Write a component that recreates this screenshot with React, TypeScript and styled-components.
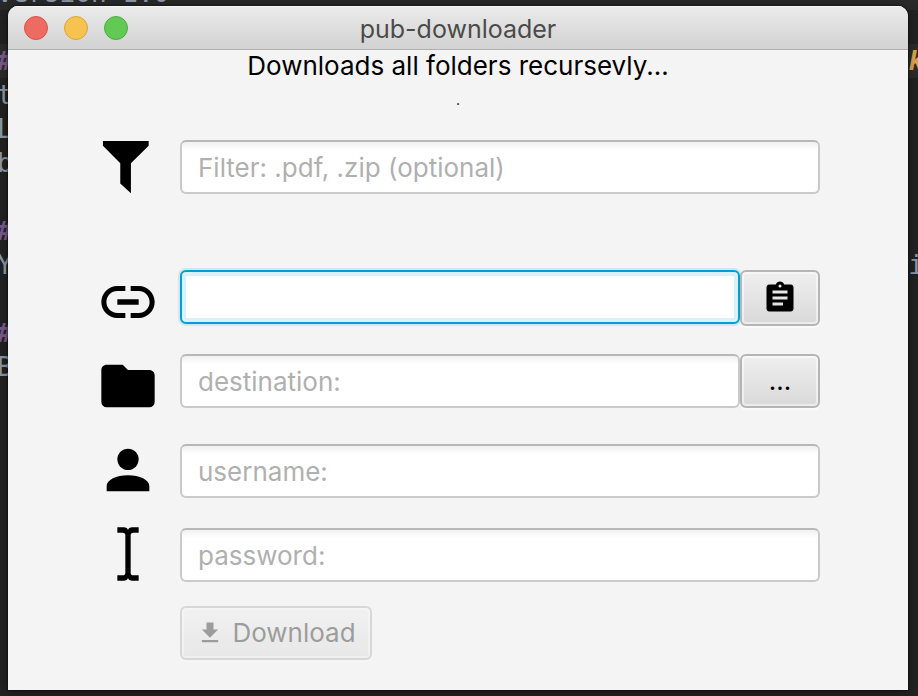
import React from "react";
import styled, { createGlobalStyle, css } from "styled-components";

const GlobalStyle = createGlobalStyle`
  *, *::before, *::after { box-sizing: border-box; }
  html, body, #root { height: 100%; margin: 0; }
  body { background: #222222; overflow: hidden; }
`;

const uiFont = css`
  font-family: Inter, "Liberation Sans", sans-serif;
  font-size: 26px;
  line-height: 32px;
`;

const Desktop = styled.div`
  position: relative;
  display: flex;
  min-height: 100%;
  padding: 6px 10px 6px 8px;
  background: #222222;
`;

const Editor = styled.div`
  position: absolute;
  inset: 0;
  padding-top: 10px;
  overflow: hidden;
  font: 26px/34px "DejaVu Sans Mono", monospace;
  color: #8d9aaa;
`;

const EditorLine = styled.div<{ $active?: boolean }>`
  display: flex;
  justify-content: space-between;
  height: 34px;
  margin: 0 -6px 0 -3px;
  white-space: pre;
  background: ${(p) => (p.$active ? "#2b2b2b" : "transparent")};
`;

const FirstLine = styled(EditorLine)`
  margin-top: -34px;
  background: #292929;
`;

const Hash = styled.span`
  color: #7b5b8c;
  font-weight: bold;
  font-style: italic;
`;

const Keyword = styled.span`
  color: #e0a550;
  font-weight: bold;
  font-style: italic;
`;

const Window = styled.main`
  position: relative;
  flex: 1;
  display: flex;
  flex-direction: column;
  overflow: hidden;
  background: #f4f4f4;
  border-radius: 10px 10px 0 0;
  box-shadow: 0 0 2px #000, 0 2px 12px rgba(0, 0, 0, 0.4);
`;

const TitleBar = styled.header`
  display: grid;
  grid-template-columns: 1fr auto 1fr;
  align-items: center;
  height: 44px;
  padding: 0 16px;
  background: linear-gradient(#ebebeb, #d2d2d2);
  border-bottom: 1px solid #b0b0b0;
  box-shadow: inset 0 1px #f8f8f8;
`;

const Lights = styled.div`
  display: flex;
  gap: 16px;
`;

const Light = styled.button<{ $fill: string; $edge: string }>`
  width: 24px;
  height: 24px;
  padding: 0;
  border: 1px solid ${(p) => p.$edge};
  border-radius: 50%;
  background: ${(p) => p.$fill};
`;

const Title = styled.h1`
  ${uiFont}
  margin: 0;
  padding-top: 2px;
  font-size: 25px;
  font-weight: 400;
  color: #4b4b4b;
`;

const Status = styled.div`
  ${uiFont}
  height: 76px;
  text-align: center;
  color: #000;
`;

const Heading = styled.p`
  margin: 0;
`;

const Progress = styled.p`
  margin: 0;
  font-size: 14px;
  line-height: 36px;
`;

const Form = styled.form`
  padding: 14px 88px 0;
`;

const Row = styled.div<{ $after: number }>`
  display: grid;
  grid-template-columns: 64px minmax(0, 1fr);
  grid-template-rows: 54px;
  column-gap: 20px;
  margin-bottom: ${(p) => p.$after}px;
`;

const IconLabel = styled.label<{ $centered: boolean }>`
  display: block;
  align-self: ${(p) => (p.$centered ? "center" : "start")};
  padding-bottom: 2px;
`;

const Glyph = styled.svg`
  display: block;
  flex: none;
  fill: currentColor;
`;

const Controls = styled.div`
  display: flex;
  align-items: flex-start;
`;

const Field = styled.input`
  ${uiFont}
  flex: 1;
  min-width: 0;
  height: 54px;
  padding: 0 16px;
  border: 2px solid #cacaca;
  border-top-color: #b8b8b8;
  border-radius: 6px;
  outline: none;
  background: linear-gradient(#f0f0f0, #fff 8px);
  color: #333;
  &::placeholder {
    color: #b0b0b0;
    opacity: 1;
  }
  &:focus {
    border-color: #039ed3;
    background: #fff;
    box-shadow: 0 0 0 2px #cfe8f2, inset 0 0 0 4px #daf1fa;
  }
`;

const Button = styled.button<{ $tall?: boolean }>`
  ${uiFont}
  display: flex;
  align-items: center;
  justify-content: center;
  width: 80px;
  height: ${(p) => (p.$tall ? 56 : 54)}px;
  padding: 0;
  border: 2px solid #b5b5b5;
  border-radius: 6px;
  background: linear-gradient(#efefef, #d9d9d9);
  box-shadow: inset 0 0 0 2px rgba(255, 255, 255, 0.5), 0 2px #fafafa;
  color: #000;
`;

const DownloadButton = styled(Button)`
  grid-column: 2;
  gap: 8px;
  width: 192px;
  color: #333;
  opacity: 0.45;
`;

const paths = {
  link: "M16,6H13V7.9H16C18.26,7.9 20.1,9.73 20.1,12A4.1,4.1 0 0,1 16,16.1H13V18H16A6,6 0 0,0 22,12C22,8.68 19.31,6 16,6M3.9,12C3.9,9.73 5.74,7.9 8,7.9H11V6H8A6,6 0 0,0 2,12A6,6 0 0,0 8,18H11V16.1H8C5.74,16.1 3.9,14.26 3.9,12M8,13H16V11H8V13Z",
  folder:
    "M10,4H4C2.89,4 2,4.89 2,6V18A2,2 0 0,0 4,20H20A2,2 0 0,0 22,18V8C22,6.89 21.1,6 20,6H12L10,4Z",
  account:
    "M12,4A4,4 0 0,1 16,8A4,4 0 0,1 12,12A4,4 0 0,1 8,8A4,4 0 0,1 12,4M12,14C16.42,14 20,15.79 20,18V20H4V18C4,15.79 7.58,14 12,14Z",
  cursor:
    "M13,19A1,1 0 0,0 14,20H16V22H13.5C12.95,22 12,21.55 12,21C12,21.55 11.05,22 10.5,22H8V20H10A1,1 0 0,0 11,19V5A1,1 0 0,0 10,4H8V2H10.5C11.05,2 12,2.45 12,3C12,2.45 12.95,2 13.5,2H16V4H14A1,1 0 0,0 13,5V19Z",
  filter: "M2.6,2.6H19.75V4.45L13.1,11V22.2L9.1,18.6V11L2.6,4.45Z",
  clipboard:
    "M17,9H7V7H17M17,13H7V11H17M14,17H7V15H14M12,3A1,1 0 0,1 13,4A1,1 0 0,1 12,5A1,1 0 0,1 11,4A1,1 0 0,1 12,3M19,3H14.82C14.4,1.84 13.3,1 12,1C10.7,1 9.6,1.84 9.18,3H5A2,2 0 0,0 3,5V19A2,2 0 0,0 5,21H19A2,2 0 0,0 21,19V5A2,2 0 0,0 19,3Z",
  download: "M5,20H19V18H5M19,9H15V3H9V9H5L12,16L19,9Z",
};

function Icon({ name, size }: { name: keyof typeof paths; size: number }) {
  return (
    <Glyph width={size} height={size} viewBox="0 0 24 24" aria-hidden="true">
      <path d={paths[name]} />
    </Glyph>
  );
}

type FieldRowProps = {
  id: string;
  label: string;
  icon: keyof typeof paths;
  after: number;
  placeholder?: string;
  type?: string;
  autoFocus?: boolean;
  children?: React.ReactNode;
};

function FieldRow({ id, label, icon, after, children, ...input }: FieldRowProps) {
  return (
    <Row $after={after}>
      <IconLabel htmlFor={id} aria-label={label} $centered={!children}>
        <Icon name={icon} size={64} />
      </IconLabel>
      <Controls>
        <Field id={id} {...input} />
        {children}
      </Controls>
    </Row>
  );
}

export default function App() {
  return (
    <>
      <GlobalStyle />
      <Desktop>
        <Editor aria-hidden="true">
          <FirstLine>version 1.0</FirstLine>
          <EditorLine />
          <EditorLine $active>
            <Hash>#</Hash>
            <Keyword>k</Keyword>
          </EditorLine>
          <EditorLine>t</EditorLine>
          <EditorLine>L</EditorLine>
          <EditorLine>b</EditorLine>
          <EditorLine />
          <EditorLine>
            <Hash>#</Hash>
          </EditorLine>
          <EditorLine>
            <span>Y</span>
            <span>i</span>
          </EditorLine>
          <EditorLine />
          <EditorLine>
            <Hash>#</Hash>
          </EditorLine>
          <EditorLine>B</EditorLine>
        </Editor>
        <Window>
          <TitleBar>
            <Lights>
              <Light aria-label="Close" $fill="#ed6b60" $edge="#d8544a" />
              <Light aria-label="Minimize" $fill="#f6c350" $edge="#dba43c" />
              <Light aria-label="Zoom" $fill="#62c955" $edge="#4dae41" />
            </Lights>
            <Title>pub-downloader</Title>
          </TitleBar>
          <Status>
            <Heading>Downloads all folders recursevly...</Heading>
            <Progress>.</Progress>
          </Status>
          <Form onSubmit={(e) => e.preventDefault()}>
            <FieldRow id="filter" label="Filter" icon="filter" after={76} placeholder="Filter: .pdf, .zip (optional)" />
            <FieldRow id="url" label="Link" icon="link" after={30} autoFocus>
              <Button type="button" $tall aria-label="Paste link">
                <Icon name="clipboard" size={36} />
              </Button>
            </FieldRow>
            <FieldRow id="destination" label="Destination" icon="folder" after={36} placeholder="destination:">
              <Button type="button">...</Button>
            </FieldRow>
            <FieldRow id="username" label="Username" icon="account" after={30} placeholder="username:" />
            <FieldRow id="password" label="Password" icon="cursor" after={24} type="password" placeholder="password:" />
            <Row $after={0}>
              <DownloadButton type="submit" disabled>
                <Icon name="download" size={28} />
                Download
              </DownloadButton>
            </Row>
          </Form>
        </Window>
      </Desktop>
    </>
  );
}
